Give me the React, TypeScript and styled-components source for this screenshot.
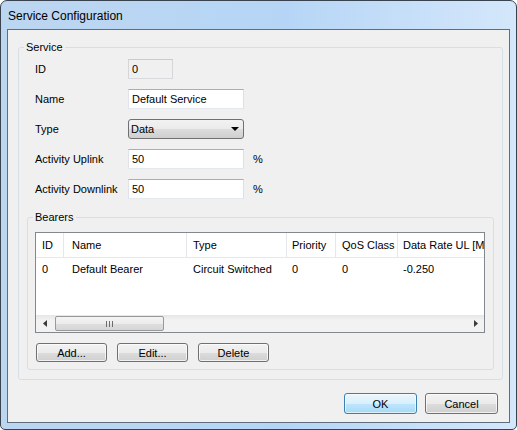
import React from 'react';
import styled, { createGlobalStyle } from 'styled-components';

const GlobalStyle = createGlobalStyle`
  html, body { margin: 0; padding: 0; background: #ffffff; }
  body { font-family: "Liberation Sans", Arial, sans-serif; font-size: 11px; color: #000; }
  * { box-sizing: border-box; }
`;

const Window = styled.div`
  width: 517px;
  height: 430px;
  border: 1px solid #38434f;
  border-radius: 7px 7px 5px 5px;
  background: linear-gradient(to right, #bcd6f0 0%, #b6d5f6 55%, #d4e7fb 100%);
  display: flex;
  flex-direction: column;
  padding: 0 6px 6px 6px;
  overflow: hidden;
`;

const TitleBar = styled.div`
  height: 28px;
  display: flex;
  align-items: center;
  padding-left: 1px;
  padding-top: 1px;
  font-size: 12px;
  color: #000;
`;

const Client = styled.div`
  flex: 1;
  border: 1px solid #5f6e7d;
  background: #f0f0f0;
  display: flex;
  flex-direction: column;
`;

const Group = styled.fieldset<{ $ml: number; $mr: number; $mt: number; $mb: number }>`
  margin: ${p => p.$mt}px ${p => p.$mr}px ${p => p.$mb}px ${p => p.$ml}px;
  padding: 0;
  border: 1px solid #d5dfe5;
  border-radius: 3px;
  min-inline-size: 0;
`;

const Legend = styled.legend`
  margin-left: 5px;
  padding: 0 2px;
  line-height: 14px;
  height: 14px;
  color: #000;
`;

const FormGrid = styled.div`
  display: grid;
  grid-template-columns: 93px 116px auto;
  grid-auto-rows: 20px;
  row-gap: 10px;
  align-items: center;
  margin: 5px 0 0 16px;
`;

const Label = styled.div`
  line-height: 20px;
`;

const TextInput = styled.input<{ $w?: number; $disabled?: boolean }>`
  width: ${p => (p.$w ? `${p.$w}px` : '116px')};
  height: 20px;
  margin: 0;
  padding: 0 3px;
  font: inherit;
  color: #000;
  background: ${p => (p.$disabled ? '#f0f0f0' : '#ffffff')};
  border: 1px solid ${p => (p.$disabled ? '#c9cbcf' : '#abadb3')};
  border-left-color: ${p => (p.$disabled ? '#d4d6d9' : '#e2e3ea')};
  border-right-color: ${p => (p.$disabled ? '#d4d6d9' : '#dbdfe6')};
  border-bottom-color: ${p => (p.$disabled ? '#d9dadd' : '#e3e9ef')};
  outline: none;
`;

const Combo = styled.div`
  width: 116px;
  height: 20px;
  border: 1px solid #707070;
  border-radius: 3px;
  background: linear-gradient(to bottom, #f2f2f2 0%, #ebebeb 50%, #dddddd 51%, #cfcfcf 100%);
  display: flex;
  align-items: center;
  justify-content: space-between;
  padding: 0 4px 0 2px;
`;

const Unit = styled.div`
  margin-left: 9px;
`;

const ListBox = styled.div`
  margin: 8px 8px 0 7px;
  height: 101px;
  border: 1px solid #828790;
  background: #ffffff;
  display: flex;
  flex-direction: column;
  overflow: hidden;
`;

const Rows = styled.div`
  flex: 1;
  overflow: hidden;
`;

const Row = styled.div<{ $header?: boolean }>`
  display: grid;
  grid-template-columns: 28px 123px 100px 49px 62px 140px;
  height: ${p => (p.$header ? '25px' : '19px')};
  align-items: center;
  white-space: nowrap;
  border-bottom: ${p => (p.$header ? '1px solid #e5e8ec' : 'none')};
  margin-top: ${p => (p.$header ? '0' : '1px')};
`;

const Cell = styled.div<{ $header?: boolean; $pad?: number }>`
  height: 100%;
  display: flex;
  align-items: center;
  padding-left: ${p => p.$pad ?? 6}px;
  border-right: ${p => (p.$header ? '1px solid #e3e6ea' : 'none')};
  overflow: hidden;
`;

const HScroll = styled.div`
  height: 17px;
  display: flex;
  align-items: center;
  background: linear-gradient(to bottom, #e6e6e6 0%, #f2f2f2 30%, #f2f2f2 100%);
`;

const ScrollArrow = styled.div`
  width: 17px;
  height: 17px;
  display: flex;
  align-items: center;
  justify-content: center;
`;

const ScrollTrack = styled.div`
  flex: 1;
  height: 17px;
  display: flex;
  align-items: center;
`;

const Thumb = styled.div`
  margin-left: 2px;
  width: 109px;
  height: 15px;
  border: 1px solid #999999;
  border-radius: 2px;
  background: linear-gradient(to bottom, #f4f4f4 0%, #ececec 50%, #dedede 51%, #d6d6d6 100%);
  display: flex;
  align-items: center;
  justify-content: center;
`;

const ButtonRow = styled.div<{ $gap: number; $justify: string }>`
  display: flex;
  gap: ${p => p.$gap}px;
  justify-content: ${p => p.$justify};
`;

const Button = styled.div<{ $w: number; $h: number; $default?: boolean }>`
  width: ${p => p.$w}px;
  height: ${p => p.$h}px;
  border: 1px solid ${p => (p.$default ? '#3c7fb1' : '#707070')};
  border-radius: 3px;
  background: ${p =>
    p.$default
      ? 'linear-gradient(to bottom, #eaf6fd 0%, #d9f0fc 50%, #bee6fd 51%, #a7d9f5 100%)'
      : 'linear-gradient(to bottom, #f2f2f2 0%, #ebebeb 50%, #dddddd 51%, #cfcfcf 100%)'};
  box-shadow: inset 0 0 0 1px ${p => (p.$default ? 'rgba(255,255,255,0.6)' : 'rgba(255,255,255,0.7)')};
  display: flex;
  align-items: center;
  justify-content: center;
  color: #000;
`;

const BearerButtons = styled(ButtonRow)`
  margin: 10px 0 7px 8px;
`;

const Footer = styled(ButtonRow)`
  margin: 13px 11px 8px 0;
`;

const ArrowLeft = () => (
  <svg width="4" height="7" viewBox="0 0 4 7">
    <path d="M4 0 L0 3.5 L4 7 Z" fill="#3a3a3a" />
  </svg>
);
const ArrowRight = () => (
  <svg width="4" height="7" viewBox="0 0 4 7">
    <path d="M0 0 L4 3.5 L0 7 Z" fill="#3a3a3a" />
  </svg>
);
const ArrowDown = () => (
  <svg width="8" height="4" viewBox="0 0 8 4">
    <path d="M0 0 L8 0 L4 4 Z" fill="#000" />
  </svg>
);
const Grip = () => (
  <svg width="7" height="6" viewBox="0 0 7 6">
    <rect x="0" y="0" width="1" height="6" fill="#6c6c6c" />
    <rect x="3" y="0" width="1" height="6" fill="#6c6c6c" />
    <rect x="6" y="0" width="1" height="6" fill="#6c6c6c" />
  </svg>
);

const headers = ['ID', 'Name', 'Type', 'Priority', 'QoS Class', 'Data Rate UL [Mbps]'];
const rows = [['0', 'Default Bearer', 'Circuit Switched', '0', '0', '-0.250']];
const pads = [6, 8, 6, 5, 6, 5];

export default function App() {
  return (
    <>
      <GlobalStyle />
      <Window>
        <TitleBar>Service Configuration</TitleBar>
        <Client>
          <Group $mt={10} $ml={10} $mr={6} $mb={0}>
            <Legend>Service</Legend>
            <FormGrid>
              <Label>ID</Label>
              <TextInput $w={45} $disabled readOnly value="0" />
              <span />
              <Label>Name</Label>
              <TextInput readOnly value="Default Service" />
              <span />
              <Label>Type</Label>
              <Combo>
                <span>Data</span>
                <ArrowDown />
              </Combo>
              <span />
              <Label>Activity Uplink</Label>
              <TextInput readOnly value="50" />
              <Unit>%</Unit>
              <Label>Activity Downlink</Label>
              <TextInput readOnly value="50" />
              <Unit>%</Unit>
            </FormGrid>
            <Group $mt={11} $ml={8} $mr={8} $mb={9}>
              <Legend>Bearers</Legend>
              <ListBox>
                <Rows>
                  <Row $header>
                    {headers.map((h, i) => (
                      <Cell key={h} $header $pad={pads[i]}>{h}</Cell>
                    ))}
                  </Row>
                  {rows.map((r, ri) => (
                    <Row key={ri}>
                      {r.map((c, i) => (
                        <Cell key={i} $pad={pads[i]}>{c}</Cell>
                      ))}
                    </Row>
                  ))}
                </Rows>
                <HScroll>
                  <ScrollArrow><ArrowLeft /></ScrollArrow>
                  <ScrollTrack>
                    <Thumb><Grip /></Thumb>
                  </ScrollTrack>
                  <ScrollArrow><ArrowRight /></ScrollArrow>
                </HScroll>
              </ListBox>
              <BearerButtons $gap={10} $justify="flex-start">
                <Button $w={71} $h={19}>Add...</Button>
                <Button $w={71} $h={19}>Edit...</Button>
                <Button $w={71} $h={19}>Delete</Button>
              </BearerButtons>
            </Group>
          </Group>
          <Footer $gap={8} $justify="flex-end">
            <Button $w={73} $h={21} $default>OK</Button>
            <Button $w={73} $h={21}>Cancel</Button>
          </Footer>
        </Client>
      </Window>
    </>
  );
}
